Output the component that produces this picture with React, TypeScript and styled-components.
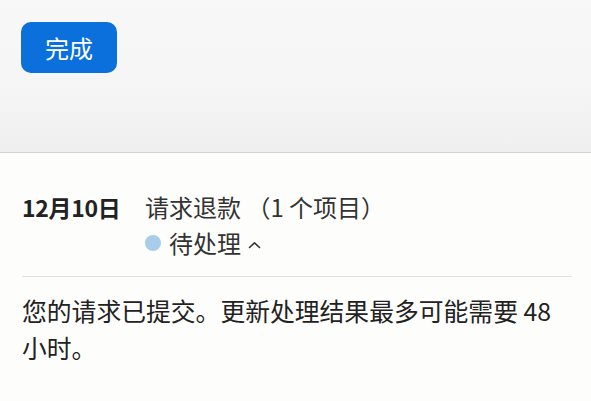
import styled, { createGlobalStyle } from 'styled-components'

const GlobalStyle = createGlobalStyle`
    html, body {
        margin: 0;
        padding: 0;
        background: #fdfdfb;
    }
    body {
        font-family: "Noto Sans CJK SC", "Noto Sans", sans-serif;
        color: #222;
    }
`

const App = () => {
    return (
        <Page>
            <GlobalStyle />
            <TopBar>
                <DoneButton>完成</DoneButton>
            </TopBar>
            <Content>
                <RequestRow>
                    <DateLabel>12月10日</DateLabel>
                    <RequestInfo>
                        <RequestTitle>请求退款 （1 个项目）</RequestTitle>
                        <StatusLine>
                            <StatusDot />
                            <span>待处理</span>
                            <Chevron viewBox="0 0 13 8">
                                <path d="M1.5 6.5 L6.5 1.8 L11.5 6.5" />
                            </Chevron>
                        </StatusLine>
                    </RequestInfo>
                </RequestRow>
                <Divider />
                <Message>
                    您的请求已提交。更新处理结果最多可能需要 48 小时。
                </Message>
            </Content>
        </Page>
    )
}

export default App

const Page = styled.div`
    width: 591px;
    min-height: 401px;
    background: #fdfdfb;
`

const TopBar = styled.header`
    height: 153px;
    box-sizing: border-box;
    padding: 22px 0 0 21px;
    background: linear-gradient(180deg, #f8f8f8 0%, #f5f5f5 60%, #efefef 100%);
    border-bottom: 1px solid #d3d3d3;
`

const DoneButton = styled.button`
    width: 96px;
    height: 51px;
    border: none;
    border-radius: 10px;
    background: #0b6fdc;
    color: #fff;
    font-family: "Noto Sans CJK SC", sans-serif;
    font-size: 24px;
    line-height: 51px;
    padding: 0;
    cursor: pointer;
`

const Content = styled.main`
    padding: 36px 19px 0 22px;
`

const RequestRow = styled.div`
    display: grid;
    grid-template-columns: 123px 1fr;
    line-height: 36px;
`

const DateLabel = styled.div`
    font-size: 23px;
    font-weight: 700;
    letter-spacing: -0.3px;
    color: #222;
`

const RequestInfo = styled.div`
    display: flex;
    flex-direction: column;
`

const RequestTitle = styled.div`
    font-size: 24px;
    color: #333;
`

const StatusLine = styled.div`
    display: flex;
    align-items: center;
    font-size: 24px;
    color: #333;
`

const StatusDot = styled.span`
    width: 16px;
    height: 16px;
    border-radius: 50%;
    background: #a9cde9;
    margin-right: 8px;
`

const Chevron = styled.svg`
    width: 13px;
    height: 8px;
    margin-left: 7px;
    margin-top: 4px;
    fill: none;
    stroke: #333;
    stroke-width: 1.6;
    stroke-linecap: round;
    stroke-linejoin: round;
`

const Divider = styled.hr`
    border: none;
    border-top: 1px solid #e2e2e2;
    margin: 15px 0 15px;
`

const Message = styled.p`
    margin: 0;
    font-size: 24.8px;
    line-height: 37px;
    color: #222;
`
